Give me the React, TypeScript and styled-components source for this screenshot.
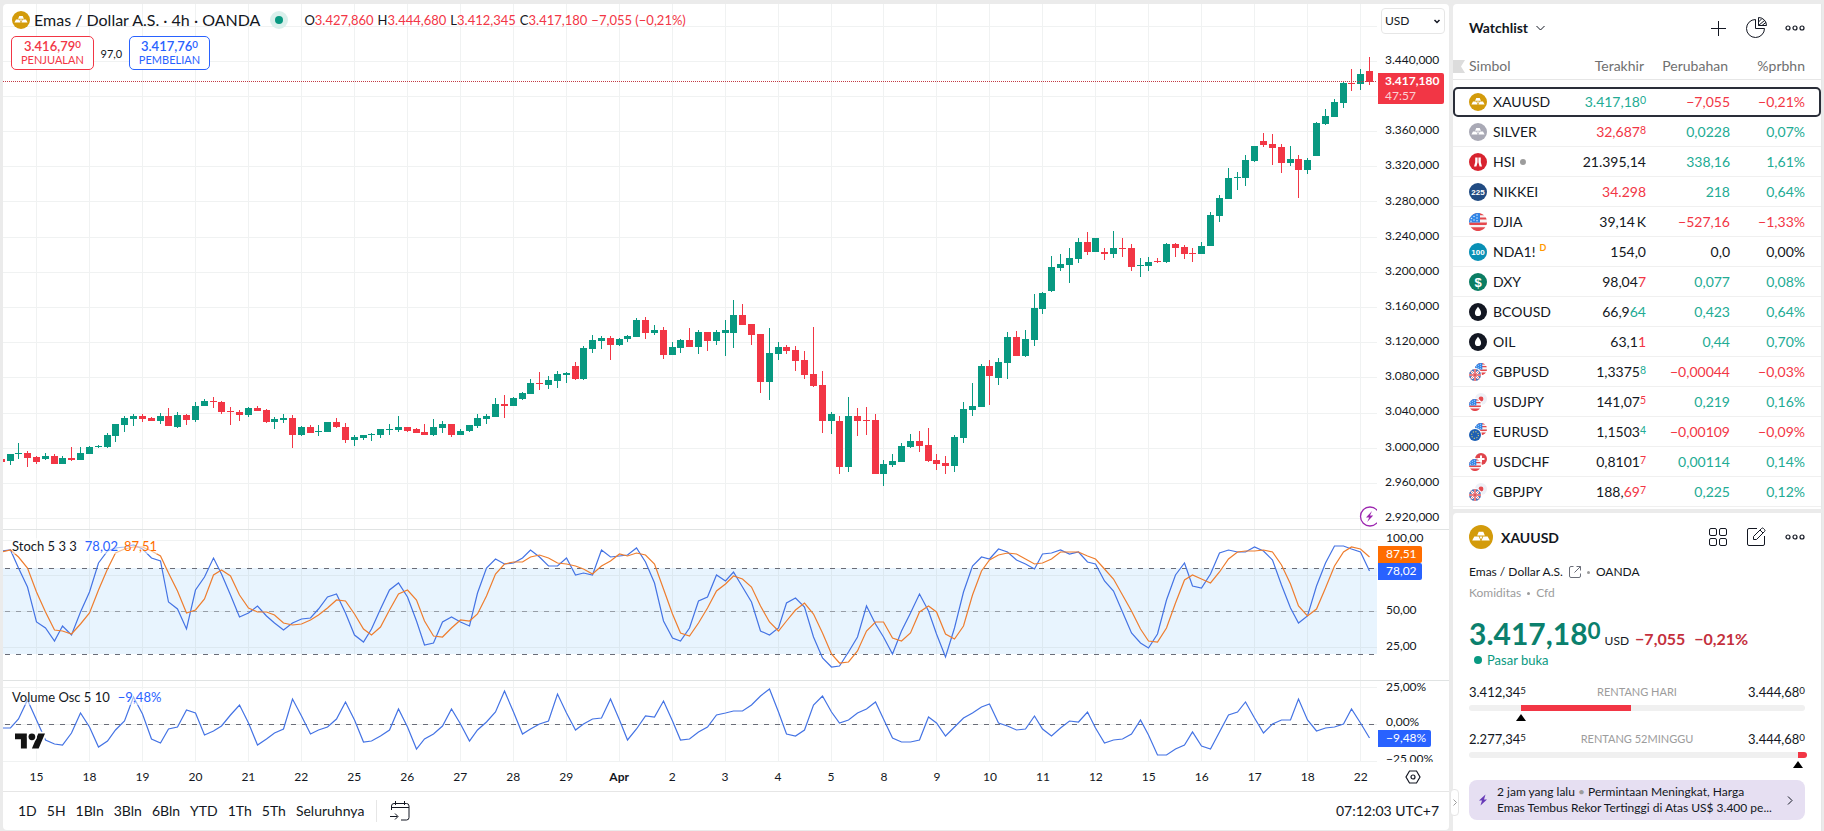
import React from "react";
import styled, { createGlobalStyle } from "styled-components";

const color = {
  text: "#131722",
  muted: "#707070",
  faint: "#9c9c9c",
  line: "#e6e6e6",
  grid: "#f0f2f2",
  up: "#089981",
  down: "#f23645",
  blue: "#2962ff",
  orange: "#ff6d00",
  frame: "#ebebeb",
};

type Tone = "up" | "down" | "none";

const toneColor: Record<Tone, string> = {
  up: "#22ab94",
  down: "#f23645",
  none: color.text,
};

/* ---------- chart data (pane pixels) ---------- */

const FIRST = -4;
const barX = (i: number) => 36 + Math.round((i + FIRST) * 8.828);

// direction, wick top, body top, body bottom, wick bottom
const candles = `
r 459 459 462 462|g 454 454 461 465|g 443 453 454 459|r 451 453 458 467|r 456 457 462 464|g 453 456 459 460
r 454 456 464 464|g 456 458 464 464|r 447 458 460 461|g 447 453 460 460|g 446 447 454 454|g 445 446 447 448
g 433 435 447 448|g 424 424 436 442|g 416 418 425 432|g 414 416 419 426|r 414 416 419 422|r 417 418 421 421
g 413 416 421 424|r 408 416 426 426|g 412 415 427 428|r 414 415 420 425|g 402 406 420 422|g 399 401 406 406
r 397 401 402 408|r 401 402 412 414|r 407 411 412 425|r 410 412 415 421|g 407 408 415 417|r 406 408 411 411
r 409 410 422 423|g 417 419 422 429|g 414 418 420 423|r 415 418 435 448|g 426 427 435 436|r 425 427 433 433
g 425 431 432 436|g 422 422 432 432|r 418 422 427 428|r 423 427 440 443|g 435 437 440 446|g 435 435 438 440
g 433 434 435 441|g 429 429 435 438|g 424 429 430 435|g 416 427 430 432|r 427 427 431 432|r 428 429 433 433
r 424 432 435 435|g 419 427 435 436|g 421 424 428 433|r 424 424 435 437|g 429 431 435 435|g 425 425 431 432
g 414 418 426 428|g 414 416 419 424|g 398 404 417 417|r 395 404 406 418|g 397 398 406 406|g 392 393 399 400
g 379 383 394 394|r 372 383 384 390|g 376 380 385 389|g 371 374 381 388|g 372 373 375 383|r 362 366 379 380
g 346 348 379 380|g 335 340 349 353|g 336 338 341 349|r 336 338 345 360|g 338 339 345 346|g 335 336 339 342
g 318 320 337 337|r 317 320 333 339|g 325 330 333 335|r 327 330 355 359|g 342 347 355 355|g 339 340 348 353
r 328 340 347 347|g 330 332 347 354|r 332 332 341 351|g 330 332 341 345|g 320 330 333 356|g 300 315 333 348
r 304 315 325 325|r 324 324 335 345|r 334 334 382 393|g 328 353 382 400|g 342 347 354 360|r 345 347 351 354
r 346 350 361 371|r 351 360 375 379|r 327 374 386 387|r 371 385 421 433|g 412 414 421 434|r 416 421 467 474
g 397 416 467 472|r 408 416 421 436|r 407 420 421 435|r 414 420 474 474|g 460 464 474 486|g 454 461 465 467
g 443 446 462 462|g 434 441 447 448|r 431 441 446 452|r 428 445 461 462|r 454 460 464 470|r 456 463 466 474
g 435 437 466 472|g 402 409 438 443|g 383 406 410 416|g 364 366 407 407|r 360 366 376 405|g 358 362 378 385
g 332 337 363 379|r 331 337 356 356|g 330 339 356 357|g 294 308 340 346|g 292 293 309 314|g 256 267 291 292
g 254 264 268 271|g 248 258 265 283|g 238 242 259 263|r 232 242 252 255|g 238 238 252 252|r 248 252 254 260
g 231 248 254 258|r 238 248 249 257|r 244 248 267 271|g 258 265 266 277|g 257 262 266 271|r 258 261 262 263
g 243 244 262 263|r 243 244 248 257|r 245 247 254 259|r 248 253 254 262|g 242 246 254 254|g 212 215 246 246
g 195 198 216 222|g 168 178 199 199|g 172 177 178 190|g 155 160 178 186|g 146 146 161 162|r 133 141 145 147
r 134 144 148 165|r 144 147 163 173|g 146 159 163 166|r 155 159 170 198|g 158 160 170 174|g 122 123 156 156
g 109 116 124 125|g 99 102 117 117|g 82 83 103 108|r 69 83 84 91|g 69 74 84 90|r 57 71 82 85`
  .trim()
  .split(/[|\n]/)
  .map((entry) => {
    const [dir, ...ys] = entry.split(" ");
    const [high, top, bottom, low] = ys.map(Number);
    return { up: dir === "g", high, top, bottom, low };
  });

const series = (values: string) => values.trim().split(/\s+/).map(Number);

const stochK = series(`
551 550 568 587 622 628 641 626 635 612 592 563 551 548 547 545 549 558 561 602 609 629 590 577 558 574 595 617
613 606 616 623 630 623 619 618 609 597 594 613 635 642 629 609 590 583 597 621 645 643 622 617 622 626 593 568
559 564 563 558 550 557 566 566 558 575 573 575 550 557 556 555 548 562 583 621 638 641 628 601 597 575 581 572
587 602 631 635 628 603 598 607 637 658 667 666 652 637 606 624 637 654 631 613 594 611 634 657 628 592 566 557
559 549 552 560 564 569 554 553 550 554 552 562 564 581 591 612 633 643 648 634 600 575 563 586 588 574 553 550
552 552 547 551 560 585 608 623 616 586 563 546 546 549 552 571`);

const stochD = series(`
552 550 557 568 592 612 630 631 634 624 613 590 569 553 549 547 547 551 556 573 591 613 610 599 575 570 576 595
608 612 612 615 623 625 624 620 615 608 600 601 614 629 635 627 610 594 590 600 621 636 637 628 620 621 614 596
574 564 562 562 557 555 558 563 564 566 569 574 566 561 554 556 553 555 564 589 614 633 636 623 608 591 584 576
579 587 606 622 631 621 610 603 614 633 654 663 662 651 631 622 622 638 641 633 612 606 612 634 639 626 595 571
560 555 553 554 559 564 563 559 552 552 552 556 559 569 579 595 611 629 641 642 628 603 580 575 579 583 572 559
552 551 551 550 552 565 584 606 616 609 588 566 552 547 549 557`);

const volumeOsc = series(`
728 728 719 700 720 740 744 745 733 713 727 747 741 730 721 697 714 739 743 729 727 710 713 735 731 726 715 705
723 745 739 733 729 699 716 734 730 727 719 702 720 742 741 736 730 709 727 749 739 734 726 709 724 741 730 722
712 691 712 734 729 724 721 694 713 730 724 719 718 699 720 740 729 716 717 701 721 740 739 732 727 715 713 711
711 705 696 689 712 734 736 730 705 696 712 723 720 713 709 702 719 738 742 742 740 717 723 736 727 718 713 707
704 723 726 730 729 716 729 736 728 721 722 712 728 743 740 739 734 720 735 755 755 749 745 732 746 749 732 715
712 702 718 733 724 720 720 699 720 731 728 727 724 709 723 738`);

const toPoints = (ys: number[]) => ys.map((y, i) => `${barX(i) + 0.5},${y}`).join(" ");

const days = "15 18 19 20 21 22 25 26 27 28 29 Apr 2 3 4 5 8 9 10 11 12 15 16 17 18 22".split(" ");
const dayLines = days.map((_, i) => barX(i * 6 - FIRST));
const priceLines = [26, 61, 96, 131, 166, 201, 237, 272, 307, 342, 377, 413, 448, 483, 518];
const prices = [
  "3.440,000", "", "3.360,000", "3.320,000", "3.280,000", "3.240,000", "3.200,000",
  "3.160,000", "3.120,000", "3.080,000", "3.040,000", "3.000,000", "2.960,000", "2.920,000",
];

/* ---------- page ---------- */

const GlobalStyle = createGlobalStyle`
  * { box-sizing: border-box; }
  body {
    margin: 0;
    background: ${color.frame};
    color: ${color.text};
    font-family: "Trebuchet MS", Lato, "Liberation Sans", sans-serif;
    font-size: 14px;
  }
  button, select { font: inherit; color: inherit; }
`;

const Page = styled.div`
  display: grid;
  grid-template-columns: minmax(0, 1fr) 371px;
  gap: 4px;
  min-height: 100vh;
  padding: 4px 0 0 3px;
`;

const ChartPanel = styled.main`
  display: flex;
  flex-direction: column;
  align-self: start;
  background: #fff;
  border-radius: 4px;
  overflow: hidden;
`;

const Pane = styled.section<{ $height: number; $divided?: boolean }>`
  position: relative;
  display: grid;
  grid-template-columns: minmax(0, 1fr) 72px;
  height: ${(p) => p.$height}px;
  border-top: ${(p) => (p.$divided ? "1px solid #e0e3e3" : "0")};
  overflow: hidden;
`;

const Plot = styled.svg`
  display: block;
  width: 100%;
  height: 100%;
`;

const Scale = styled.div`
  position: relative;
  display: flex;
  flex-direction: column;
  min-height: 0;
  font-size: 12px;
  line-height: 16px;
`;

const PriceList = styled.div`
  flex: 1;
  display: flex;
  flex-direction: column;
  justify-content: space-between;
  padding: 18px 0 4px 8px;
`;

const Tick = styled.span<{ $before?: number; $tight?: boolean }>`
  height: ${(p) => (p.$tight ? 10 : 16)}px;
  line-height: ${(p) => (p.$tight ? 10 : 16)}px;
  flex: none;
  margin-top: ${(p) => p.$before ?? 0}px;
  padding-left: 9px;
`;

const PriceTick = styled.span`
  height: 16px;
`;

const ValueTag = styled.span<{ $fill: string }>`
  align-self: flex-start;
  flex: none;
  height: 17px;
  margin-left: 1px;
  padding: 0 5px 0 8px;
  border-radius: 0 2px 2px 0;
  background: ${(p) => p.$fill};
  color: #fff;
`;

const LastPriceTag = styled.div`
  position: absolute;
  top: 69px;
  left: 1px;
  width: 66px;
  height: 31px;
  padding: 0 0 0 7px;
  border-radius: 0 2px 2px 0;
  background: ${color.down};
  color: #fff;
  line-height: 15px;
  font-weight: 700;
`;

const Countdown = styled.div`
  font-weight: 400;
  color: #fbd0d4;
`;

const CurrencyWrap = styled.label`
  position: relative;
  display: block;
  margin: 4px 4px 0;
  svg {
    position: absolute;
    right: 3px;
    top: 8px;
    pointer-events: none;
  }
`;

const Currency = styled.select`
  appearance: none;
  display: block;
  width: 100%;
  height: 26px;
  padding: 0 3px;
  border: 1px solid ${color.line};
  border-radius: 4px;
  background: #fff;
  font-size: 12px;
`;

const Legend = styled.div<{ $top: number }>`
  position: absolute;
  top: ${(p) => p.$top}px;
  left: 9px;
  display: flex;
  gap: 8px;
  background: rgba(255, 255, 255, 0.5);
  font-size: 13px;
  line-height: 16px;
`;

const Series = styled.span<{ $fill: string }>`
  color: ${(p) => p.$fill};
  & + & {
    margin-left: -2px;
  }
`;

const BrandMark = styled.a`
  position: absolute;
  left: 12px;
  bottom: 13px;
  display: flex;
`;

const SymbolBar = styled.div`
  position: absolute;
  top: 5px;
  left: 9px;
  display: flex;
  align-items: center;
  height: 22px;
`;

const SymbolTitle = styled.h1`
  margin: 0 0 0 4px;
  font-size: 16px;
  font-weight: 400;
  line-height: 22px;
`;

const Status = styled.span`
  display: grid;
  place-items: center;
  width: 18px;
  height: 18px;
  margin: 0 16px 0 10px;
  border-radius: 50%;
  background: #daf0ec;
  &::after {
    content: "";
    width: 8px;
    height: 8px;
    border-radius: 50%;
    background: ${color.up};
  }
`;

const Ohlc = styled.span`
  display: flex;
  gap: 4px;
  font-size: 13px;
  b {
    font-weight: 400;
    color: ${color.down};
  }
`;

const Quote = styled.div`
  position: absolute;
  top: 32px;
  left: 8px;
  display: flex;
  align-items: center;
  font-size: 11px;
`;

const Spread = styled.span`
  width: 35px;
  text-align: center;
`;

const TradeButton = styled.button<{ $fill: string }>`
  height: 34px;
  min-width: 80px;
  padding: 0 9px;
  border: 1px solid ${(p) => p.$fill};
  border-radius: 5px;
  background: #fff;
  color: ${(p) => p.$fill};
  font-size: 11px;
  line-height: 14px;
  strong {
    display: block;
    font-size: 13px;
    font-weight: 600;
  }
`;

const Raised = styled.span<{ $fill?: string }>`
  color: ${(p) => p.$fill ?? "inherit"};
  font-size: 0.75em;
  vertical-align: 0.28em;
  line-height: 0;
`;

const TimeAxis = styled.div`
  display: flex;
  align-items: center;
  height: 29px;
  padding-left: 7px;
  font-size: 12px;
`;

const DayLabel = styled.span<{ $strong: boolean }>`
  flex: 1;
  text-align: center;
  font-weight: ${(p) => (p.$strong ? 700 : 400)};
`;

const AxisSettings = styled.button`
  display: flex;
  width: 62px;
  padding: 0 0 0 18px;
  border: 0;
  background: none;
`;

const BottomBar = styled.footer`
  display: flex;
  align-items: center;
  height: 39px;
  padding: 0 10px 0 15px;
  border-top: 1px solid ${color.line};
`;

const RangeButtons = styled.nav`
  display: flex;
  gap: 10px;
  padding-right: 12px;
  border-right: 1px solid ${color.line};
`;

const PlainButton = styled.button`
  display: flex;
  align-items: center;
  padding: 0;
  border: 0;
  background: none;
  line-height: 22px;
`;

const GoTo = styled(PlainButton)`
  margin-left: 13px;
`;

const Clock = styled(PlainButton)`
  margin-left: auto;
`;

/* ---------- side panel ---------- */

const Side = styled.aside`
  position: relative;
  display: flex;
  flex-direction: column;
  gap: 4px;
  padding-right: 2px;
  background: ${color.frame};
`;

const Card = styled.section`
  padding-bottom: 2px;
  background: #fff;
  border-radius: 4px 0 0 0;
  border-right: 1px solid ${color.line};
`;

const DetailCard = styled(Card)`
  flex: 1;
  padding: 12px 16px 10px;
`;

const CardHeader = styled.header`
  display: flex;
  align-items: center;
  height: 48px;
  padding: 0 16px;
`;

const DetailHeader = styled.header`
  display: flex;
  align-items: center;
  gap: 8px;
  height: 24px;
`;

const Heading = styled.h2`
  margin: 0;
  font-size: 14px;
  font-weight: 700;
`;

const ListButton = styled(PlainButton)`
  gap: 8px;
`;

const Actions = styled.div`
  display: flex;
  gap: 18px;
  margin-left: auto;
`;

const WatchTable = styled.table`
  width: 100%;
  table-layout: fixed;
  border-spacing: 0;
  font-size: 14px;
`;

const HeadCell = styled.th<{ $width?: number; $pad?: number }>`
  width: ${(p) => (p.$width ? `${p.$width}px` : "auto")};
  height: 28px;
  padding: 0 ${(p) => p.$pad ?? 2}px 0 0;
  border-bottom: 1px solid ${color.line};
  color: ${color.muted};
  font-weight: 400;
  text-align: right;
  &:first-child {
    text-align: left;
  }
`;

const HeadFlag = styled.svg`
  margin-right: 4px;
  vertical-align: -2px;
`;

const SpacerRow = styled.tr`
  height: 7px;
`;

const WatchRow = styled.tr<{ $selected?: boolean }>`
  height: 30px;
  border-radius: 5px;
  outline: ${(p) => (p.$selected ? "2px solid #2a2e39" : "0")};
  outline-offset: -2px;
  td {
    padding: 0;
    border-bottom: 1px solid ${(p) => (p.$selected ? "transparent" : "#f0f0f0")};
    text-align: right;
  }
  td:last-child {
    padding-right: 16px;
  }
`;

const NameCell = styled.div`
  display: flex;
  align-items: center;
  gap: 6px;
  padding-left: 16px;
`;

const Delay = styled.sup`
  align-self: flex-start;
  margin-left: -2px;
  color: #ff9800;
  font-size: 9px;
  font-weight: 700;
  line-height: 9px;
`;

const Closed = styled.span`
  width: 6px;
  height: 6px;
  margin-left: -1px;
  border-radius: 50%;
  background: ${color.faint};
`;

const Toned = styled.span<{ $tone: Tone }>`
  color: ${(p) => toneColor[p.$tone]};
`;

const Issuer = styled.p`
  display: flex;
  align-items: center;
  gap: 6px;
  margin: 15px 0 0;
  font-size: 12px;
  line-height: 16px;
`;

const Kind = styled(Issuer)`
  margin-top: 5px;
  color: ${color.faint};
`;

const Bullet = styled.i`
  width: 3px;
  height: 3px;
  border-radius: 50%;
  background: ${color.faint};
`;

const PriceRow = styled.div`
  display: flex;
  align-items: baseline;
  height: 31px;
  margin-top: 20px;
  font-size: 16px;
  font-weight: 700;
  line-height: 24px;
  color: #c4303d;
`;

const BigPrice = styled.span`
  margin-right: 4px;
  color: #0b806d;
  font-size: 30px;
`;

const Unit = styled.span`
  margin-right: 6px;
  color: ${color.text};
  font-size: 12px;
  font-weight: 400;
`;

const ChangePct = styled.span`
  margin-left: 9px;
`;

const MarketState = styled.p`
  display: flex;
  align-items: center;
  gap: 5px;
  margin: 0 0 0 5px;
  color: ${color.up};
  font-size: 13px;
  line-height: 16px;
  &::before {
    content: "";
    width: 8px;
    height: 8px;
    border-radius: 50%;
    background: ${color.up};
  }
`;

const Range = styled.div`
  margin-top: 16px;
  & + & {
    margin-top: 20px;
  }
`;

const RangeLabels = styled.div`
  display: flex;
  justify-content: space-between;
  font-size: 13px;
  line-height: 16px;
`;

const RangeName = styled.span`
  color: ${color.faint};
  font-size: 11px;
`;

const Track = styled.div`
  position: relative;
  height: 6px;
  margin-top: 5px;
  border-radius: 3px;
  background: #f0f0f0;
`;

const Fill = styled.span<{ $capped: boolean }>`
  position: absolute;
  top: 0;
  height: 6px;
  border-radius: ${(p) => (p.$capped ? "0 3px 3px 0" : "0")};
  background: ${color.down};
`;

const Pointer = styled.span`
  position: absolute;
  top: 9px;
  margin-left: -5px;
  border: 5px solid transparent;
  border-top-width: 0;
  border-bottom: 7px solid #000;
`;

const News = styled.a`
  display: grid;
  grid-template-columns: 28px minmax(0, 1fr) 30px;
  align-items: center;
  height: 40px;
  margin-top: 22px;
  border-radius: 8px;
  background: #e6dff2;
  color: ${color.text};
  font-size: 12px;
  line-height: 16px;
  text-decoration: none;
  svg {
    justify-self: center;
  }
`;

const NewsLine = styled.span`
  display: block;
  white-space: nowrap;
  i {
    color: ${color.faint};
    font-style: normal;
  }
`;

const Handle = styled.button`
  position: absolute;
  left: -3px;
  bottom: 15px;
  display: grid;
  place-items: center;
  width: 9px;
  height: 27px;
  padding: 0;
  border: 1px solid ${color.line};
  border-radius: 4px;
  background: #fff;
`;

/* ---------- icons ---------- */

const Metal = ({ size, fill }: { size: number; fill: string }) => (
  <svg width={size} height={size} viewBox="0 0 18 18" aria-hidden="true">
    <circle cx="9" cy="9" r="9" fill={fill} />
    <path fill="#fff" d="M7.300 5h3.400l1.200 2.800H6.100zM4 8.600h3.300l1.300 3H2.400zM10.700 8.600H14l1.600 3H9.400zM7.900 8.600h2.200L9 10.800z" />
  </svg>
);

const Dots = () => (
  <svg width="20" height="20" viewBox="0 0 20 20" fill="none" stroke="#131722" strokeWidth="1.200" aria-hidden="true">
    <circle cx="3" cy="10" r="2" />
    <circle cx="10" cy="10" r="2" />
    <circle cx="17" cy="10" r="2" />
  </svg>
);

const Us = ({ r }: { r: number }) => (
  <g transform={`scale(${r / 9})`}>
    <circle r="9" fill="#f7f3f3" />
    <path
      fill="#e5484d"
      d="M-8.600-2.600A9 9 0 0 1-7.800-4.500H7.800A9 9 0 0 1 8.600-2.600zM-4.500-7.800A9 9 0 0 1 4.500-7.800 9 9 0 0 1 6-6.700H-6zM-9 .600H9A9 9 0 0 1 8.500 3H-8.500zM-7.300 5.300H7.300A9 9 0 0 1 4.500 7.800 9 9 0 0 1-4.500 7.800z"
    />
    <path fill="#2f86e8" d="M-9 .600A9 9 0 0 1 2-8.770V.600z" />
    <g fill="#cfe4fb">
      {[[-1, -7], [-4, -5.5], [-1, -4], [-6.5, -3.5], [-4, -2], [-1, -1.2], [-7, -0.8]].map(([x, y]) => (
        <circle key={`${x}${y}`} cx={x} cy={y} r="0.800" />
      ))}
    </g>
  </g>
);

const Gb = () => (
  <g>
    <circle r="6" fill="#2b4fa0" />
    <path stroke="#fff" strokeWidth="2.400" d="M-4-4L4 4M4-4L-4 4M0-6V6M-6 0H6" />
    <path stroke="#e0555c" strokeWidth="1.500" d="M0-6V6M-6 0H6" />
    <path stroke="#e0555c" strokeWidth="0.700" d="M-4-4L4 4M4-4L-4 4" />
  </g>
);

const Jp = () => (
  <g>
    <circle r="6" fill="#eef0f6" />
    <circle r="2.400" fill="#e5484d" />
  </g>
);

const Eu = () => (
  <g>
    <circle r="6" fill="#1d5fb4" />
    <circle r="3.400" fill="none" stroke="#d8cf72" strokeWidth="1.100" strokeDasharray="1.100 1.570" />
  </g>
);

const Ch = () => (
  <g>
    <circle r="6" fill="#e0454c" />
    <path stroke="#fff" strokeWidth="2" d="M0-3.500V3.500M-3.500 0H3.500" />
  </g>
);

const Pair = ({ front, back }: { front: React.ReactNode; back: React.ReactNode }) => (
  <svg width="18" height="18" viewBox="0 0 18 18" aria-hidden="true">
    <g transform="translate(12 6)">{back}</g>
    <circle cx="6" cy="12" r="7" fill="#fff" />
    <g transform="translate(6 12)">{front}</g>
  </svg>
);

const Badge = ({ fill, children }: { fill: string; children: React.ReactNode }) => (
  <svg width="18" height="18" viewBox="0 0 18 18" aria-hidden="true">
    <circle cx="9" cy="9" r="9" fill={fill} />
    {children}
  </svg>
);

const BadgeText = styled.text`
  fill: #fff;
  font: 700 8px "Liberation Sans", sans-serif;
  text-anchor: middle;
`;

const DollarText = styled(BadgeText)`
  font-size: 13px;
`;

const Drop = () => (
  <Badge fill="#131722">
    <path fill="#fff" d="M9 3.800c1.500 2 3.100 4 3.100 6.200a3.100 3.100 0 0 1-6.200 0C5.900 7.800 7.500 5.800 9 3.800z" />
  </Badge>
);

/* ---------- watchlist ---------- */

type Item = {
  name: string;
  icon: React.ReactNode;
  last: string;
  tail?: string;
  raised?: string;
  lastTone?: Tone;
  tailTone?: Tone;
  change: string;
  pct: string;
  tone: Tone;
};

const items: Item[] = [
  { name: "XAUUSD", icon: <Metal size={18} fill="#d39b0b" />, last: "3.417,18", raised: "0", lastTone: "up", tailTone: "up", change: "−7,055", pct: "−0,21%", tone: "down" },
  { name: "SILVER", icon: <Metal size={18} fill="#a9a9b5" />, last: "32,687", raised: "8", lastTone: "down", tailTone: "down", change: "0,0228", pct: "0,07%", tone: "up" },
  {
    name: "HSI",
    icon: (
      <Badge fill="#d8232f">
        <path fill="#fff" d="M6.200 4.500h2.400v4.700L7.400 13.500H5l1.200-4.300zM9.400 4.500h2.400v4.700l1.200 4.300h-2.400L9.400 9.200z" />
      </Badge>
    ),
    last: "21.395,14", change: "338,16", pct: "1,61%", tone: "up",
  },
  { name: "NIKKEI", icon: <Badge fill="#214b82"><BadgeText x="9" y="12">225</BadgeText></Badge>, last: "34.298", lastTone: "down", change: "218", pct: "0,64%", tone: "up" },
  { name: "DJIA", icon: <svg width="18" height="18" viewBox="-9 -9 18 18" aria-hidden="true"><Us r={9} /></svg>, last: "39,14\u2009K", change: "−527,16", pct: "−1,33%", tone: "down" },
  { name: "NDA1!", icon: <Badge fill="#0990b5"><BadgeText x="9" y="12">100</BadgeText></Badge>, last: "154,0", change: "0,0", pct: "0,00%", tone: "none" },
  { name: "DXY", icon: <Badge fill="#0b7d63"><DollarText x="9" y="13.500">$</DollarText></Badge>, last: "98,04", tail: "7", tailTone: "down", change: "0,077", pct: "0,08%", tone: "up" },
  { name: "BCOUSD", icon: <Drop />, last: "66,9", tail: "64", tailTone: "up", change: "0,423", pct: "0,64%", tone: "up" },
  { name: "OIL", icon: <Drop />, last: "63,1", tail: "1", tailTone: "down", change: "0,44", pct: "0,70%", tone: "up" },
  { name: "GBPUSD", icon: <Pair front={<Gb />} back={<Us r={6} />} />, last: "1,3375", raised: "8", tailTone: "up", change: "−0,00044", pct: "−0,03%", tone: "down" },
  { name: "USDJPY", icon: <Pair front={<Us r={6} />} back={<Jp />} />, last: "141,07", raised: "5", tailTone: "down", change: "0,219", pct: "0,16%", tone: "up" },
  { name: "EURUSD", icon: <Pair front={<Eu />} back={<Us r={6} />} />, last: "1,1503", raised: "4", tailTone: "up", change: "−0,00109", pct: "−0,09%", tone: "down" },
  { name: "USDCHF", icon: <Pair front={<Us r={6} />} back={<Ch />} />, last: "0,8101", raised: "7", tailTone: "down", change: "0,00114", pct: "0,14%", tone: "up" },
  { name: "GBPJPY", icon: <Pair front={<Gb />} back={<Jp />} />, last: "188,", tail: "69", raised: "7", tailTone: "down", change: "0,225", pct: "0,12%", tone: "up" },
];

const LastValue = ({ item }: { item: Item }) => {
  const tailTone = item.tailTone ?? "none";
  return (
    <>
      <Toned $tone={item.lastTone ?? "none"}>{item.last}</Toned>
      {item.tail && <Toned $tone={tailTone}>{item.tail}</Toned>}
      {item.raised && <Raised $fill={toneColor[tailTone]}>{item.raised}</Raised>}
    </>
  );
};

const HeaderActions = styled(Actions)`
  gap: 17px;
`;

const Watchlist = () => (
  <Card>
    <CardHeader>
      <ListButton>
        <Heading>Watchlist</Heading>
        <svg width="9" height="6" viewBox="0 0 9 6" fill="none" stroke="#131722" aria-hidden="true">
          <path d="M0.500 1l4 4 4-4" />
        </svg>
      </ListButton>
      <HeaderActions>
        <PlainButton aria-label="Tambah simbol">
          <svg width="20" height="20" viewBox="0 0 20 20" stroke="#131722" aria-hidden="true">
            <path d="M9.500 3v15M2 10.500h15" />
          </svg>
        </PlainButton>
        <PlainButton aria-label="Tampilan lanjutan">
          <svg width="22" height="22" viewBox="0 0 22 22" fill="none" stroke="#131722" aria-hidden="true">
            <path d="M9.500 2.500a9 9 0 1 0 9 9h-9z" />
            <path d="M12.500 0.500v8h8a8 8 0 0 0-8-8zM12.500 5l3.500-3.500M12.500 8.500l6-5M16 8.500l4-3.200" />
          </svg>
        </PlainButton>
        <PlainButton aria-label="Lainnya">
          <Dots />
        </PlainButton>
      </HeaderActions>
    </CardHeader>
    <WatchTable>
      <thead>
        <tr>
          <HeadCell>
            <HeadFlag width="12" height="13" viewBox="0 0 12 13" aria-hidden="true">
              <path fill="#dcdcdc" d="M0 0h12L8 6.500l4 6.500H0z" />
            </HeadFlag>
            Simbol
          </HeadCell>
          <HeadCell $width={84}>Terakhir</HeadCell>
          <HeadCell $width={84}>Perubahan</HeadCell>
          <HeadCell $width={91} $pad={16}>%prbhn</HeadCell>
        </tr>
      </thead>
      <tbody>
        <SpacerRow aria-hidden="true" />
        {items.map((item, i) => (
          <WatchRow key={item.name} $selected={i === 0}>
            <td>
              <NameCell>
                {item.icon}
                {item.name}
                {item.name === "HSI" && <Closed />}
                {item.name === "NDA1!" && <Delay>D</Delay>}
              </NameCell>
            </td>
            <td>
              <LastValue item={item} />
            </td>
            <td>
              <Toned $tone={item.tone}>{item.change}</Toned>
            </td>
            <td>
              <Toned $tone={item.tone}>{item.pct}</Toned>
            </td>
          </WatchRow>
        ))}
      </tbody>
    </WatchTable>
  </Card>
);

type RangeBarProps = { name: string; low: string; high: string; from: number; to: number };

const RangeBar = ({ name, low, high, from, to }: RangeBarProps) => (
  <Range>
    <RangeLabels>
      <span>
        {low}
        <Raised>5</Raised>
      </span>
      <RangeName>{name}</RangeName>
      <span>
        {high}
        <Raised>0</Raised>
      </span>
    </RangeLabels>
    <Track>
      <Fill $capped={to >= 100} style={{ left: `${from}%`, width: `${to - from}%` }} />
      <Pointer style={{ left: `${from}%` }} />
    </Track>
  </Range>
);

const Details = () => (
  <DetailCard>
    <DetailHeader>
      <Metal size={24} fill="#d39b0b" />
      <Heading>XAUUSD</Heading>
      <Actions>
        <PlainButton aria-label="Kisi">
          <svg width="20" height="20" viewBox="0 0 20 20" fill="none" stroke="#131722" aria-hidden="true">
            <rect x="0.500" y="1.500" width="7" height="7" rx="1.500" />
            <rect x="10.500" y="1.500" width="7" height="7" rx="1.500" />
            <rect x="0.500" y="11.500" width="7" height="7" rx="1.500" />
            <rect x="10.500" y="11.500" width="7" height="7" rx="1.500" />
          </svg>
        </PlainButton>
        <PlainButton aria-label="Catatan">
          <svg width="20" height="20" viewBox="0 0 20 20" fill="none" stroke="#131722" aria-hidden="true">
            <path d="M10 1.500H2A1.500 1.500 0 0 0 .500 3v14A1.500 1.500 0 0 0 2 18.500h14a1.500 1.500 0 0 0 1.500-1.500V9" />
            <path d="M6.500 12.500v-3l8-8a1.400 1.400 0 0 1 2 0l1 1a1.400 1.400 0 0 1 0 2l-8 8zM13 3l3 3" />
          </svg>
        </PlainButton>
        <PlainButton aria-label="Lainnya">
          <Dots />
        </PlainButton>
      </Actions>
    </DetailHeader>
    <Issuer>
      Emas / Dollar A.S.
      <svg width="12" height="12" viewBox="0 0 12 12" fill="none" stroke="#6a6d78" aria-hidden="true">
        <path d="M4.500 0.500H2A1.500 1.500 0 0 0 0.500 2v8A1.500 1.500 0 0 0 2 11.500h8a1.500 1.500 0 0 0 1.500-1.500V7.500M7.500 0.500h4v4M11.500 0.500l-6 6" />
      </svg>
      <Bullet />
      OANDA
    </Issuer>
    <Kind>
      Komiditas
      <Bullet />
      Cfd
    </Kind>
    <PriceRow>
      <BigPrice>
        3.417,18
        <Raised>0</Raised>
      </BigPrice>
      <Unit>USD</Unit>
      <span>−7,055</span>
      <ChangePct>−0,21%</ChangePct>
    </PriceRow>
    <MarketState>Pasar buka</MarketState>
    <RangeBar name="RENTANG HARI" low="3.412,34" high="3.444,68" from={15.4} to={48.3} />
    <RangeBar name="RENTANG 52MINGGU" low="2.277,34" high="3.444,68" from={98} to={100.5} />
    <News href="#news">
      <svg width="10" height="12" viewBox="0 0 10 12" aria-hidden="true">
        <path fill="#673ab7" d="M7.500 0.500L1 6.500h3l-1.500 5L9 5.500H6z" />
      </svg>
      <span>
        <NewsLine>
          2 jam yang lalu <i>•</i> Permintaan Meningkat, Harga
        </NewsLine>
        <NewsLine>Emas Tembus Rekor Tertinggi di Atas US$ 3.400 pe...</NewsLine>
      </span>
      <svg width="6" height="9" viewBox="0 0 6 9" fill="none" stroke="#131722" aria-hidden="true">
        <path d="M1 0.500l4 4-4 4" />
      </svg>
    </News>
  </DetailCard>
);

/* ---------- chart ---------- */

const DayGrid = ({ from, to }: { from: number; to: number }) => (
  <g fill={color.grid}>
    {dayLines.map((x) => (
      <rect key={x} x={x} y={from} width="1" height={to - from} />
    ))}
  </g>
);

const PricePane = () => (
  <Pane $height={525}>
    <Plot viewBox="3 4 1374 525" preserveAspectRatio="none" shapeRendering="crispEdges" role="img" aria-label="Grafik harga">
      <DayGrid from={4} to={529} />
      <g fill={color.grid}>
        {priceLines.map((y) => (
          <rect key={y} x="3" y={y} width="1374" height="1" />
        ))}
      </g>
      {candles.map((c, i) => {
        const fill = c.up ? color.up : color.down;
        return (
          <g key={i} fill={fill}>
            <rect x={barX(i)} y={c.high} width="1" height={c.low - c.high} />
            <rect x={barX(i) - 3} y={c.top} width="7" height={c.bottom - c.top} />
          </g>
        );
      })}
      <path d="M3 81.500H1377" stroke="#c23a45" strokeDasharray="1 1" />
      <g shapeRendering="geometricPrecision">
        <circle cx="1370" cy="516.500" r="9.500" fill="#fff" stroke="#9c27b0" strokeWidth="1.300" />
        <path fill="#9c27b0" d="M1372 511l-6 6.500h3.200l-2 4.500 6-6.500h-3.200z" />
      </g>
    </Plot>
    <Scale>
      <CurrencyWrap>
        <Currency aria-label="Mata uang" defaultValue="USD">
          <option>USD</option>
        </Currency>
        <svg width="10" height="10" viewBox="0 0 10 10" fill="none" stroke="#131722" strokeWidth="1.500" aria-hidden="true">
          <path d="M2.500 4L5 6.500 7.500 4" />
        </svg>
      </CurrencyWrap>
      <PriceList>
        {prices.map((p, i) => (
          <PriceTick key={i}>{p}</PriceTick>
        ))}
      </PriceList>
      <LastPriceTag>
        3.417,180
        <Countdown>47:57</Countdown>
      </LastPriceTag>
    </Scale>
    <SymbolBar>
      <Metal size={18} fill="#d39b0b" />
      <SymbolTitle>Emas / Dollar A.S. · 4h · OANDA</SymbolTitle>
      <Status />
      <Ohlc>
        <span>O<b>3.427,860</b></span>
        <span>H<b>3.444,680</b></span>
        <span>L<b>3.412,345</b></span>
        <span>C<b>3.417,180</b></span>
        <b>−7,055 (−0,21%)</b>
      </Ohlc>
    </SymbolBar>
    <Quote>
      <TradeButton $fill={color.down}>
        <strong>3.416,79<Raised>0</Raised></strong>
        PENJUALAN
      </TradeButton>
      <Spread>97,0</Spread>
      <TradeButton $fill={color.blue}>
        <strong>3.417,76<Raised>0</Raised></strong>
        PEMBELIAN
      </TradeButton>
    </Quote>
  </Pane>
);

const StochPane = () => (
  <Pane $height={151} $divided>
    <Plot viewBox="3 530 1374 150" preserveAspectRatio="none" role="img" aria-label="Stochastic">
      <rect x="3" y="568" width="1374" height="86" fill="#e8f4fe" />
      <DayGrid from={530} to={568} />
      <DayGrid from={654} to={680} />
      <g fill="#dce8f0">
        {dayLines.map((x) => (
          <rect key={x} x={x} y="568" width="1" height="86" />
        ))}
        <rect x="3" y="575" width="1374" height="1" />
        <rect x="3" y="611" width="1374" height="1" />
        <rect x="3" y="647" width="1374" height="1" />
      </g>
      <rect x="3" y="540" width="1374" height="1" fill={color.grid} />
      <g stroke="#6a6d78" strokeDasharray="5 6">
        <path d="M5 568.500H1377M5 654.500H1377" />
        <path d="M5 611.500H1377" opacity="0.6" />
      </g>
      <g fill="none" strokeWidth="1.200">
        <polyline points={toPoints(stochK)} stroke="#4473e4" />
        <polyline points={toPoints(stochD)} stroke="#ee7d2e" />
      </g>
    </Plot>
    <Scale>
      <Tick>100,00</Tick>
      <ValueTag $fill={color.orange}>87,51</ValueTag>
      <ValueTag $fill={color.blue}>78,02</ValueTag>
      <Tick $before={22}>50,00</Tick>
      <Tick $before={20}>25,00</Tick>
    </Scale>
    <Legend $top={8}>
      Stoch 5 3 3 <Series $fill={color.blue}>78,02</Series>
      <Series $fill={color.orange}>87,51</Series>
    </Legend>
  </Pane>
);

const VolumePane = () => (
  <Pane $height={82} $divided>
    <Plot viewBox="3 681 1374 81" preserveAspectRatio="none" role="img" aria-label="Volume Osc">
      <DayGrid from={681} to={762} />
      <g fill={color.grid}>
        <rect x="3" y="687" width="1374" height="1" />
        <rect x="3" y="724" width="1374" height="1" />
        <rect x="3" y="761" width="1374" height="1" />
      </g>
      <path d="M5 724.500H1377" stroke="#6a6d78" strokeDasharray="5 6" />
      <polyline points={toPoints(volumeOsc)} fill="none" stroke="#4473e4" strokeWidth="1.200" />
    </Plot>
    <Scale>
      <Tick $tight $before={1}>25,00%</Tick>
      <Tick $before={22}>0,00%</Tick>
      <ValueTag $fill={color.blue}>−9,48%</ValueTag>
      <Tick $before={4}>−25,00%</Tick>
    </Scale>
    <Legend $top={8}>
      Volume Osc 5 10 <Series $fill={color.blue}>−9,48%</Series>
    </Legend>
    <BrandMark href="#tradingview" aria-label="TradingView">
      <svg width="30" height="16" viewBox="0 4 35.500 18" overflow="visible" aria-hidden="true">
        <g fill="#131313" stroke="#fff" strokeWidth="4" paintOrder="stroke">
          <path d="M14 22H7V11H0V4h14v18zM28 22h-8l7.500-18h8L28 22z" />
          <circle cx="20" cy="8" r="4" />
        </g>
      </svg>
    </BrandMark>
  </Pane>
);

const ranges = ["1D", "5H", "1Bln", "3Bln", "6Bln", "YTD", "1Th", "5Th", "Seluruhnya"];

export default function App() {
  return (
    <>
      <GlobalStyle />
      <Page>
        <ChartPanel>
          <PricePane />
          <StochPane />
          <VolumePane />
          <TimeAxis>
            {days.map((d, i) => (
              <DayLabel key={i} $strong={d === "Apr"}>
                {d}
              </DayLabel>
            ))}
            <AxisSettings aria-label="Pengaturan sumbu">
              <svg width="16" height="16" viewBox="0 0 16 16" fill="none" stroke="#131722" strokeWidth="1.200" aria-hidden="true">
                <path d="M4.500 2h7L15 8l-3.500 6h-7L1 8z" />
                <circle cx="8" cy="8" r="2" />
              </svg>
            </AxisSettings>
          </TimeAxis>
          <BottomBar>
            <RangeButtons>
              {ranges.map((r) => (
                <PlainButton key={r}>{r}</PlainButton>
              ))}
            </RangeButtons>
            <GoTo aria-label="Pergi ke tanggal">
              <svg width="20" height="20" viewBox="0 0 20 20" fill="none" stroke="#131722" aria-hidden="true">
                <path d="M1.500 9V5A2.500 2.500 0 0 1 4 2.500h12.500A2.500 2.500 0 0 1 19 5v11.500a2.500 2.500 0 0 1-2.500 2.500H11M1.500 6.500H19M5.500 0v4M14.500 0v4M0 15.500h7.500M5 12.500l3 3-3 3" />
              </svg>
            </GoTo>
            <Clock>07:12:03 UTC+7</Clock>
          </BottomBar>
        </ChartPanel>
        <Side>
          <Watchlist />
          <Details />
          <Handle aria-label="Tutup panel">
            <svg width="4" height="7" viewBox="0 0 4 7" fill="none" stroke="#9c9c9c" aria-hidden="true">
              <path d="M0.500 0.500l3 3-3 3" />
            </svg>
          </Handle>
        </Side>
      </Page>
    </>
  );
}
